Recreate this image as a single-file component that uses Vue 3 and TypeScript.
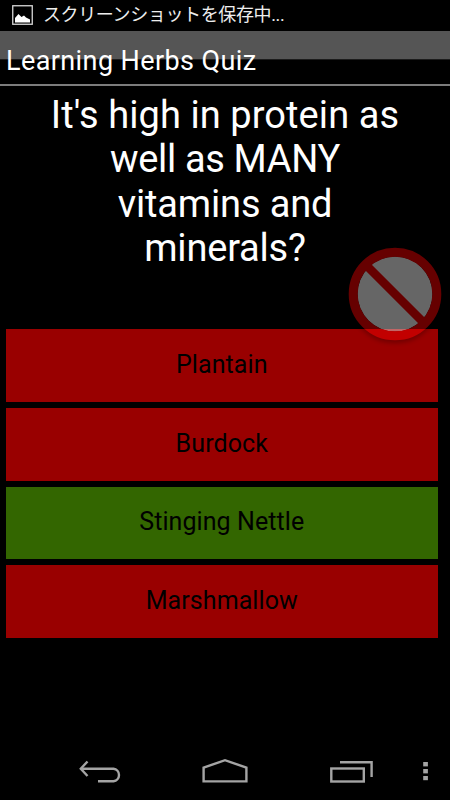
<script setup lang="ts">
interface Answer {
  label: string
  correct: boolean
}

const questionLines: { text: string; key: string }[] = [
  { text: "It's high in protein as", key: 'q1' },
  { text: 'well as MANY', key: 'q2' },
  { text: 'vitamins and', key: 'q3' },
  { text: 'minerals?', key: 'q4' },
]

const answers: Answer[] = [
  { label: 'Plantain', correct: false },
  { label: 'Burdock', correct: false },
  { label: 'Stinging Nettle', correct: true },
  { label: 'Marshmallow', correct: false },
]
</script>

<template>
  <div class="screen">
    <div class="status">
      <svg class="status-icon" width="21" height="20" viewBox="0 0 21 20">
        <rect x="0.75" y="0.75" width="19.5" height="18.5" fill="none" stroke="#d8d8d8" stroke-width="1.3" />
        <path d="M3 17.5V13L6.5 9L9.5 12L12 10.5L14 12.5L18 14.5V17.5Z" fill="#fff" />
      </svg>
      <span class="status-text">スクリーンショットを保存中...</span>
    </div>

    <header class="title-bar">
      <h1 class="title">Learning Herbs Quiz</h1>
    </header>

    <main class="quiz">
      <h2 class="question">
        <span v-for="line in questionLines" :key="line.key" :class="line.key">{{ line.text }}</span>
      </h2>
      <div class="answers">
        <button
          v-for="answer in answers"
          :key="answer.label"
          class="answer"
          :class="{ correct: answer.correct }"
        >
          <span>{{ answer.label }}</span>
        </button>
      </div>
      <svg class="wrong-mark" width="96" height="96" viewBox="0 0 96 96">
        <circle cx="48" cy="48" r="37.5" fill="#fff" />
        <circle cx="48" cy="48" r="41.8" fill="none" stroke="#ff0000" stroke-width="9" />
        <path d="M20.5 20.5L75.5 75.5" stroke="#ff0000" stroke-width="8.6" />
      </svg>
    </main>

    <nav class="nav">
      <svg width="450" height="56" viewBox="0 744 450 56" fill="none" stroke="#a4a4a4" stroke-width="2.4">
        <path d="M81 768.8H113.5A6.3 6.3 0 0 1 113.5 781.3H98" />
        <path d="M87.5 761.5L80.8 768.8L87.5 776" />
        <path d="M203.6 767.6L225 760.2L246.4 767.6V781.4H203.6Z" />
        <rect x="331.3" y="768.5" width="32.5" height="13" />
        <path d="M340 762.3H371.6V777" />
        <g fill="#a4a4a4" stroke="none">
          <rect x="423.2" y="762" width="4.7" height="4.4" />
          <rect x="423.2" y="769" width="4.7" height="4.4" />
          <rect x="423.2" y="776" width="4.7" height="4.2" />
        </g>
      </svg>
    </nav>
  </div>
</template>

<style>
body {
  margin: 0;
  background: #000;
}
</style>

<style scoped>
.screen {
  width: 450px;
  height: 800px;
  display: flex;
  flex-direction: column;
  overflow: hidden;
  background: #000;
  color: #fff;
  font-family: Roboto, "Noto Sans CJK JP", sans-serif;
}
.status {
  height: 31px;
  flex: none;
  box-sizing: border-box;
  padding: 0 0 2px 12px;
  display: flex;
  align-items: center;
  gap: 10px;
}
.status-icon {
  display: block;
}
.status-text {
  font-size: 18px;
  line-height: 26px;
  letter-spacing: -0.38px;
  white-space: nowrap;
  color: #eee;
}
.title-bar {
  height: 55px;
  flex: none;
  box-sizing: border-box;
  padding-left: 6px;
  border-bottom: 2px solid #7c7c7c;
  background: linear-gradient(#555 0 28px, #1c1c1c 28px 29px, #000 29px);
}
.title {
  margin: 0;
  padding-top: 14px;
  font-size: 27px;
  line-height: 32px;
  font-weight: 400;
  letter-spacing: 0.4px;
  white-space: nowrap;
}
.quiz {
  position: relative;
  flex: 1;
  display: flex;
  flex-direction: column;
}
.question {
  height: 243px;
  flex: none;
  box-sizing: border-box;
  margin: 0;
  padding-top: 7px;
  display: flex;
  flex-direction: column;
  align-items: center;
  font-size: 38px;
  line-height: 44.4px;
  font-weight: 400;
  white-space: nowrap;
}
.q1 {
  letter-spacing: 0.08px;
}
.q2 {
  letter-spacing: -0.35px;
}
.q3 {
  letter-spacing: -0.15px;
}
.q4 {
  letter-spacing: -0.2px;
}
.answers {
  display: flex;
  flex-direction: column;
  gap: 6px;
  padding: 0 12.5px 0 6px;
}
.answer {
  height: 72.75px;
  display: flex;
  align-items: center;
  justify-content: center;
  border: 0;
  padding: 0 0 1px;
  background: #990000;
  color: #000;
  font-family: inherit;
  font-size: 25px;
  line-height: 30px;
  letter-spacing: 0.08px;
}
.answer.correct {
  background: #336600;
}
.wrong-mark {
  position: absolute;
  left: 347.3px;
  top: 159.7px;
  opacity: 0.4;
  overflow: visible;
  filter: drop-shadow(0 3px 2px rgba(0, 0, 0, 0.6));
}
.nav {
  height: 56px;
  flex: none;
}
.nav svg {
  display: block;
}
</style>
